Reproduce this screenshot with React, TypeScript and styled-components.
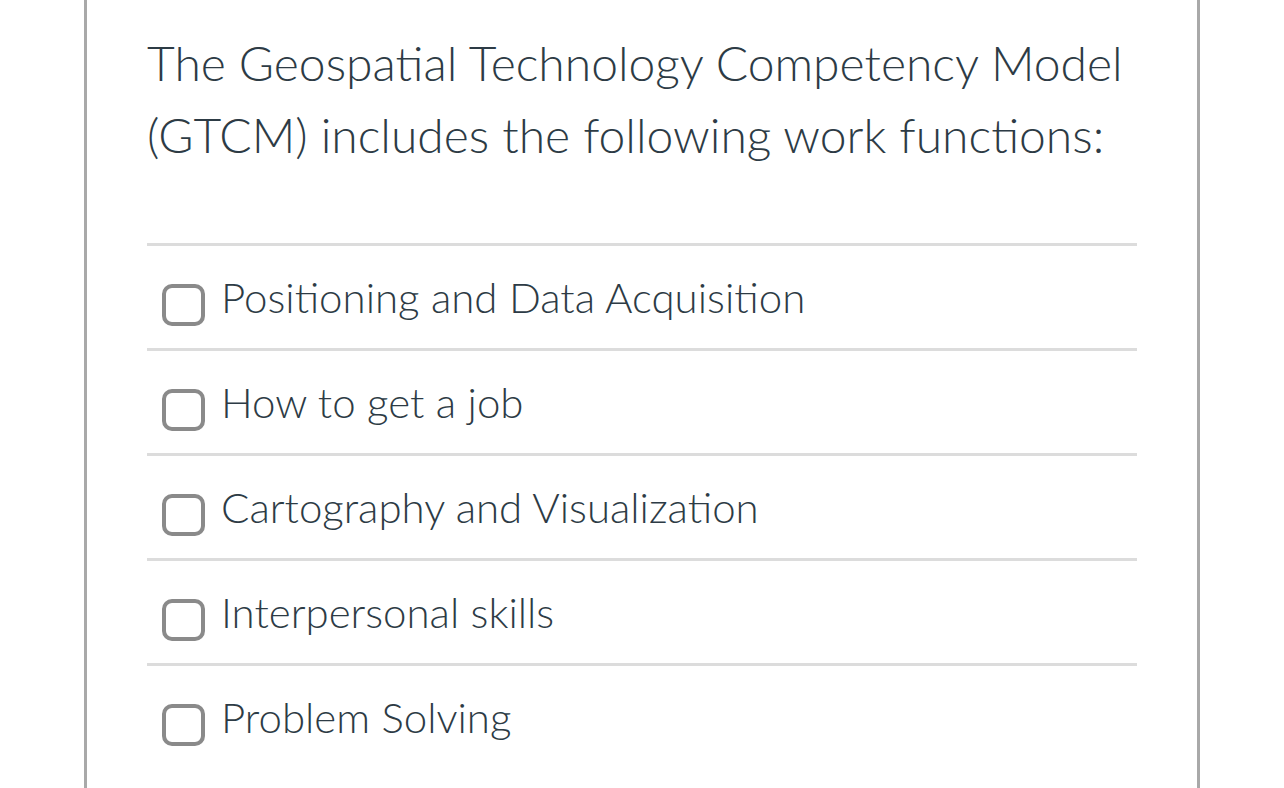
import * as React from "react";
import styled, { createGlobalStyle } from "styled-components";

const GlobalStyle = createGlobalStyle`
  html, body {
    margin: 0;
    padding: 0;
    background: #ffffff;
    overflow: hidden;
  }
`;

const Page = styled.div`
  width: 1284px;
  height: 788px;
  padding-left: 84px;
  box-sizing: border-box;
  font-family: Lato, "Liberation Sans", sans-serif;
  color: #2d3b45;
`;

const Panel = styled.div`
  width: 1116px;
  height: 788px;
  box-sizing: border-box;
  border-left: 3px solid #a9a9a9;
  border-right: 3px solid #a9a9a9;
  padding: 27px 60px 0 60px;
`;

const Question = styled.h2`
  margin: 0;
  font-size: 48px;
  font-weight: 300;
  line-height: 72px;
`;

const Answers = styled.ul`
  list-style: none;
  margin: 72px 0 0 0;
  padding: 0;
  border-top: 3px solid #dcdcdc;
`;

const Answer = styled.li`
  height: 102px;
  display: flex;
  align-items: center;
  gap: 16px;
  padding-left: 15px;
  border-bottom: 3px solid #dcdcdc;

  &:last-child {
    border-bottom-color: transparent;
  }
`;

const Box = styled.span`
  width: 35px;
  height: 34px;
  flex: none;
  border: 4px solid #8a8a8a;
  border-radius: 10px;
  margin-top: 16px;
`;

const Label = styled.span`
  font-size: 42px;
  font-weight: 300;
  line-height: 48px;
`;

const options = [
  "Positioning and Data Acquisition",
  "How to get a job",
  "Cartography and Visualization",
  "Interpersonal skills",
  "Problem Solving",
];

export default function App() {
  return (
    <Page>
      <GlobalStyle />
      <Panel>
        <Question>
          The Geospatial Technology Competency Model (GTCM) includes the
          following work functions:
        </Question>
        <Answers>
          {options.map((o) => (
            <Answer key={o}>
              <Box />
              <Label>{o}</Label>
            </Answer>
          ))}
        </Answers>
      </Panel>
    </Page>
  );
}
